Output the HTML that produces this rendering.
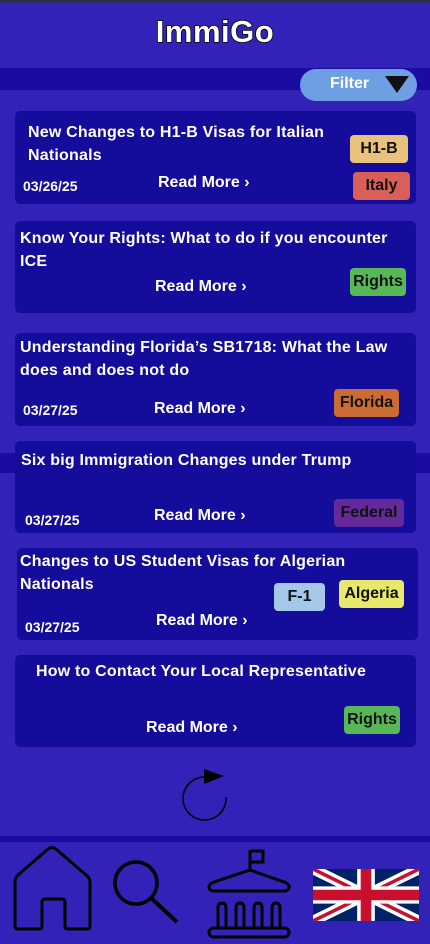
<!DOCTYPE html>
<html><head><style>
*{margin:0;padding:0;box-sizing:border-box}
body{width:430px;height:944px;background:#3322b8;font-family:"Liberation Sans",sans-serif;position:relative;overflow:hidden;color:#fff}
.abs{position:absolute}
.topstrip{left:0;top:0;width:430px;height:3px;background:#2b2f50}
.header{left:0;top:3px;width:430px;height:65px;background:#3322b8;border-radius:10px;z-index:2}
.title{left:0;top:14px;width:430px;text-align:center;font-size:31px;font-weight:bold;color:#fff;-webkit-text-stroke:1.5px #000;paint-order:stroke fill;z-index:3;letter-spacing:0.5px}
.band{left:0;top:68px;width:430px;height:22px;background:#1a0ca0}
.filter{left:300px;top:69px;width:117px;height:32px;background:#6f9fe3;border-radius:16px;z-index:3;font-weight:bold;font-size:16px;line-height:30px;padding-left:30px}
.tri{left:385px;top:76px;width:0;height:0;border-left:12px solid transparent;border-right:12px solid transparent;border-top:17px solid #111;z-index:4}
.card{position:absolute;left:15px;width:401px;background:#140c9a;border-radius:5px}
.h{position:absolute;font-size:16px;font-weight:bold;line-height:23px;color:#fff;letter-spacing:0.2px}
.d{position:absolute;font-size:14px;font-weight:bold;color:#fff}
.rm{position:absolute;font-size:16px;font-weight:bold;color:#fff}
.tag{position:absolute;height:28px;border-radius:4px;color:#111;font-size:16px;font-weight:bold;line-height:28px;text-align:center}
.band2{left:0;top:453px;width:430px;height:20px;background:#1a0ca0}
.navline{left:0;top:836px;width:430px;height:6px;background:#1a0ca0}
.nav{left:0;top:842px;width:430px;height:102px;background:#3322b8;border-radius:8px}
</style></head><body>
<div class="abs topstrip"></div>
<div class="abs band"></div>
<div class="abs header"></div>
<div class="abs title">ImmiGo</div>
<div class="abs filter">Filter</div>
<div class="abs tri"></div>

<div class="card" style="top:111px;height:93px">
  <div class="h" style="left:13px;top:10px;width:330px">New Changes to H1-B Visas for Italian Nationals</div>
  <div class="tag" style="left:335px;top:24px;width:58px;background:#e9c27e">H1-B</div>
  <div class="d" style="left:8px;top:67px">03/26/25</div>
  <div class="rm" style="left:143px;top:63px">Read More ›</div>
  <div class="tag" style="left:338px;top:61px;width:57px;background:#db5f59">Italy</div>
</div>

<div class="abs band2"></div>

<div class="card" style="top:221px;height:92px">
  <div class="h" style="left:5px;top:6px;width:385px">Know Your Rights: What to do if you encounter ICE</div>
  <div class="rm" style="left:140px;top:57px">Read More ›</div>
  <div class="tag" style="left:335px;top:47px;width:56px;background:#58b858">Rights</div>
</div>

<div class="card" style="top:333px;height:93px">
  <div class="h" style="left:5px;top:3px;width:395px">Understanding Florida’s SB1718: What the Law does and does not do</div>
  <div class="d" style="left:8px;top:69px">03/27/25</div>
  <div class="rm" style="left:139px;top:67px">Read More ›</div>
  <div class="tag" style="left:319px;top:56px;width:65px;background:#cc6c34">Florida</div>
</div>

<div class="card" style="top:441px;height:92px">
  <div class="h" style="left:6px;top:8px">Six big Immigration Changes under Trump</div>
  <div class="d" style="left:10px;top:71px">03/27/25</div>
  <div class="rm" style="left:139px;top:66px">Read More ›</div>
  <div class="tag" style="left:319px;top:58px;width:70px;background:#642a9c">Federal</div>
</div>

<div class="card" style="top:548px;height:92px;left:17px">
  <div class="h" style="left:3px;top:2px;width:380px">Changes to US Student Visas for Algerian Nationals</div>
  <div class="tag" style="left:257px;top:35px;width:51px;background:#a5c8ea">F-1</div>
  <div class="tag" style="left:322px;top:32px;width:65px;background:#e8e86a">Algeria</div>
  <div class="d" style="left:8px;top:71px">03/27/25</div>
  <div class="rm" style="left:139px;top:64px">Read More ›</div>
</div>

<div class="card" style="top:655px;height:92px">
  <div class="h" style="left:21px;top:5px">How to Contact Your Local Representative</div>
  <div class="rm" style="left:131px;top:64px">Read More ›</div>
  <div class="tag" style="left:329px;top:51px;width:56px;background:#58b858">Rights</div>
</div>

<svg class="abs" style="left:0;top:0" width="430" height="944" viewBox="0 0 430 944">
  <path d="M205 777 A21.5 21.5 0 1 0 226 797" fill="none" stroke="#000" stroke-width="1.5"/>
  <path d="M204 769 L224 776 L204 784 Z" fill="#000"/>
</svg>

<div class="abs navline"></div>
<div class="abs nav"></div>
<svg class="abs" style="left:0;top:842px" width="430" height="102" viewBox="0 0 430 102">
  <path d="M15 83 V40 Q15 36 18 33 L48 7 Q52 4 56 7 L86 33 Q90 36 90 40 V84 Q90 87 87 87 H68 Q65 87 65 84 V60 Q65 57 62 57 H45 Q42 57 42 60 V84 Q42 87 39 87 H18 Q15 87 15 84 Z" fill="none" stroke="#000" stroke-width="3"/>
  <circle cx="136" cy="41" r="21" fill="none" stroke="#000" stroke-width="3.5"/>
  <path d="M151 56 L177 80" stroke="#000" stroke-width="4"/>
  <path d="M250 8 V28 M251 9 H263 V20 H251" fill="none" stroke="#000" stroke-width="3"/>
  <path d="M250 28 L284 40 Q290 42 289 46 Q288 49 284 49 H214 Q209 49 209 45 Q209 42 214 40 Z" fill="none" stroke="#000" stroke-width="3"/>
  <path d="M218 86 V66 Q218 61 222 61 Q226 61 226 66 V86 M236 86 V66 Q236 61 240 61 Q244 61 244 66 V86 M254 86 V66 Q254 61 258 61 Q262 61 262 66 V86 M272 86 V66 Q272 61 276 61 Q280 61 280 66 V86" fill="none" stroke="#000" stroke-width="3"/>
  <rect x="209" y="86" width="80" height="9" rx="4.5" fill="none" stroke="#000" stroke-width="3"/>
  <svg x="313" y="27" width="106" height="52" viewBox="0 0 60 30" preserveAspectRatio="none">
    <rect width="60" height="30" fill="#012169"/>
    <path d="M0,0 L60,30 M60,0 L0,30" stroke="#fff" stroke-width="6"/>
    <path d="M0,0 L60,30 M60,0 L0,30" stroke="#C8102E" stroke-width="2"/>
    <path d="M30,0 V30 M0,15 H60" stroke="#fff" stroke-width="10"/>
    <path d="M30,0 V30 M0,15 H60" stroke="#C8102E" stroke-width="6"/>
  </svg>
</svg>
</body></html>
